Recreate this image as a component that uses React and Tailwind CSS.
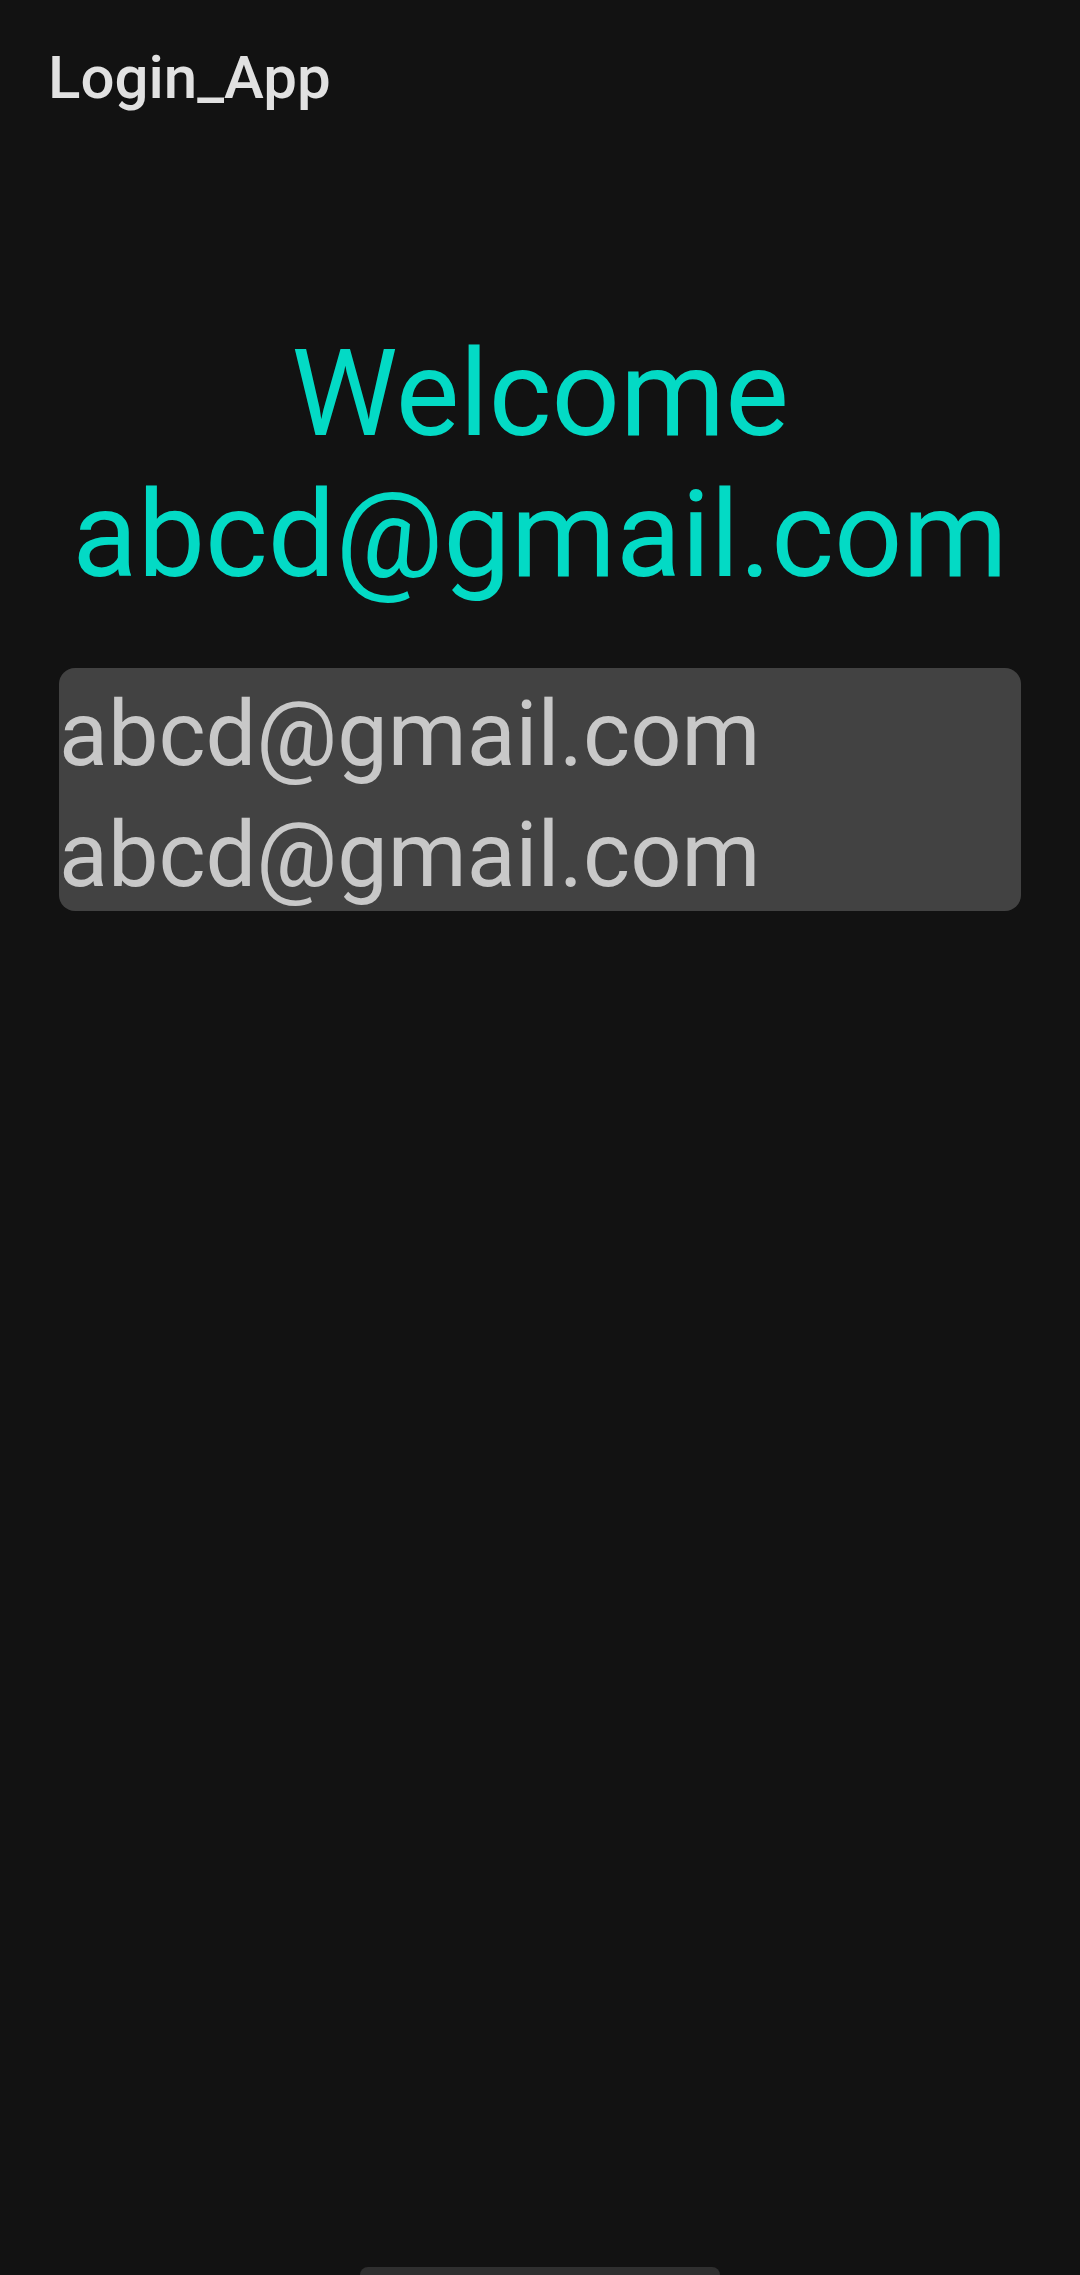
import React from "react";

const EMAIL = "abcd@gmail.com";

const App = () => {
  return (
    <div className="relative flex min-h-[2275px] w-[1080px] flex-col bg-[#121212] font-['Roboto',sans-serif]">
      <header className="px-[48px] pt-[48px]">
        <h1 className="text-[60px] font-medium leading-[60px] text-[#e1e1e1]">Login_App</h1>
      </header>

      <main className="flex flex-col pt-[216px]">
        <p className="text-center text-[120px] leading-[141px] text-[#03dac5]">
          Welcome
          <br />
          {EMAIL}
        </p>

        <div className="mx-[59px] mt-[62px] h-[243px] overflow-hidden rounded-[16px] bg-[#424242] pt-[6px]">
          {[EMAIL, EMAIL].map((line, i) => (
            <p key={i} className="text-[90px] leading-[121px] text-[#c8c8c8]">
              {line}
            </p>
          ))}
        </div>
      </main>

      <div className="absolute bottom-0 left-[360px] h-[8px] w-[360px] rounded-t-full bg-[#2f2f2f]" />
    </div>
  );
};

export default App;
